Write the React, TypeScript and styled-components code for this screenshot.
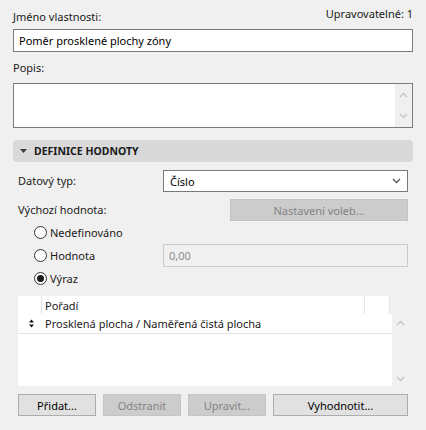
import styled, { createGlobalStyle } from 'styled-components';

const Global = createGlobalStyle`
  html, body {
    margin: 0;
    padding: 0;
    background: #f0f0f0;
  }
  body {
    font-family: "Noto Sans", "Open Sans", sans-serif;
    font-size: 11px;
    color: #1a1a1a;
  }
`

const Panel = styled.div`
  width: 426px;
  height: 430px;
  box-sizing: border-box;
  padding: 0 13px;
  display: flex;
  flex-direction: column;
`

const TopRow = styled.div`
  height: 29px;
  display: flex;
  justify-content: space-between;
`

const Label = styled.div<{ $top?: number }>`
  line-height: 16px;
  white-space: nowrap;
  padding-top: ${p => p.$top ?? 0}px;
`

const TextField = styled.div<{ $disabled?: boolean; $width?: string }>`
  box-sizing: border-box;
  height: 23px;
  width: ${p => p.$width ?? '100%'};
  background: ${p => (p.$disabled ? '#f0f0f0' : '#fff')};
  border: 1px solid ${p => (p.$disabled ? '#cccccc' : '#7a7a7a')};
  color: ${p => (p.$disabled ? '#8c8c8c' : '#000')};
  display: flex;
  align-items: center;
  padding: 0 5px;
  line-height: 16px;
`

const TextArea = styled.div`
  box-sizing: border-box;
  height: 45px;
  background: #fff;
  border: 1px solid #7a7a7a;
  display: flex;
  justify-content: flex-end;
  margin-top: 7px;
`

const ScrollBar = styled.div<{ $pad?: number }>`
  width: 17px;
  background: #f0f0f0;
  display: flex;
  flex-direction: column;
  justify-content: space-between;
  align-items: center;
  padding: ${p => p.$pad ?? 5}px 0;
`

const SectionHeader = styled.div`
  margin-top: 12px;
  height: 22px;
  background: #d9d9d9;
  border-radius: 4px;
  display: flex;
  align-items: center;
  padding-left: 7px;
  gap: 7px;
  font-size: 10.5px;
  font-weight: 700;
  color: #1a1a1a;
`

const SectionBody = styled.div`
  padding: 0 5px;
  display: flex;
  flex-direction: column;
`

const FieldRow = styled.div<{ $mt: number }>`
  margin-top: ${p => p.$mt}px;
  display: flex;
  align-items: center;
  height: 22px;
`

const RowLabel = styled.div`
  width: 145px;
  line-height: 16px;
`

const Select = styled.div`
  box-sizing: border-box;
  flex: 1;
  height: 22px;
  background: #fff;
  border: 1px solid #7a7a7a;
  display: flex;
  align-items: center;
  justify-content: space-between;
  padding: 0 6px;
  color: #000;
`

const Button = styled.div<{ $disabled?: boolean; $width?: string }>`
  box-sizing: border-box;
  height: 22px;
  width: ${p => p.$width ?? 'auto'};
  flex: ${p => (p.$width ? 'none' : '1')};
  background: ${p => (p.$disabled ? '#cccccc' : '#e1e1e1')};
  border: 1px solid ${p => (p.$disabled ? '#c4c4c4' : '#adadad')};
  color: ${p => (p.$disabled ? '#838383' : '#000')};
  display: flex;
  align-items: center;
  justify-content: center;
  white-space: nowrap;
`

const Spacer = styled.div`
  flex: 1;
`

const RadioRow = styled.div`
  height: 23px;
  display: flex;
  align-items: center;
  padding-left: 16px;
`

const RadioLabel = styled.div`
  width: 129px;
  display: flex;
  align-items: center;
  gap: 3px;
`

const Radio = styled.span<{ $checked?: boolean }>`
  box-sizing: border-box;
  width: 13px;
  height: 13px;
  border-radius: 50%;
  border: 1px solid #333;
  background: #fff;
  display: flex;
  align-items: center;
  justify-content: center;
  &::after {
    content: '';
    width: 7px;
    height: 7px;
    border-radius: 50%;
    background: ${p => (p.$checked ? '#1a1a1a' : 'transparent')};
  }
`

const List = styled.div`
  margin-top: 6px;
  height: 90px;
  display: grid;
  grid-template-columns: 1fr 16px;
  grid-template-rows: 18px 1fr;
`

const ListHead = styled.div`
  background: #fff;
  display: grid;
  grid-template-columns: 24px 1fr 25px;
  margin-right: 2px;
`

const HeadCell = styled.div`
  border-right: 1px solid #e5e5e5;
  padding-left: 3px;
  display: flex;
  align-items: center;
`

const ListBody = styled.div`
  background: #fff;
  display: flex;
  flex-direction: column;
`

const ListRow = styled.div`
  height: 19px;
  border-bottom: 1px solid #e5e5e5;
  display: flex;
  align-items: center;
`

const SortCell = styled.div`
  width: 27px;
  display: flex;
  justify-content: center;
`

const ListScroll = styled.div`
  display: flex;
  flex-direction: column;
  justify-content: space-between;
  align-items: center;
  padding: 6px 0 4px;
`

const ButtonBar = styled.div`
  margin-top: 8px;
  display: flex;
  gap: 7px;
`

const Chevron = ({ up, color = '#c2c2c2' }: { up?: boolean; color?: string }) => (
  <svg width="9" height="6" viewBox="0 0 9 6">
    <path
      d={up ? 'M1 5 L4.5 1.5 L8 5' : 'M1 1 L4.5 4.5 L8 1'}
      fill="none"
      stroke={color}
      strokeWidth="1.3"
    />
  </svg>
)

const Caret = () => (
  <svg width="7" height="4" viewBox="0 0 7 4">
    <path d="M0 0 H7 L3.5 4 Z" fill="#3c3c3c" />
  </svg>
)

const SortIcon = () => (
  <svg width="5" height="9" viewBox="0 0 5 9">
    <path d="M0 3.5 L2.5 0.5 L5 3.5 Z M0 5.5 L2.5 8.5 L5 5.5 Z" fill="#111" />
  </svg>
)

export default function App() {
  return (
    <>
      <Global />
      <Panel>
        <TopRow>
          <Label $top={9}>Jméno vlastnosti:</Label>
          <Label $top={6}>Upravovatelné: 1</Label>
        </TopRow>
        <TextField>Poměr prosklené plochy zóny</TextField>
        <Label $top={8}>Popis:</Label>
        <TextArea>
          <ScrollBar $pad={8}>
            <Chevron up />
            <Chevron />
          </ScrollBar>
        </TextArea>

        <SectionHeader>
          <Caret />
          DEFINICE HODNOTY
        </SectionHeader>

        <SectionBody>
          <FieldRow $mt={8}>
            <RowLabel>Datový typ:</RowLabel>
            <Select>
              Číslo
              <Chevron color="#555" />
            </Select>
          </FieldRow>
          <FieldRow $mt={7}>
            <RowLabel>Výchozí hodnota:</RowLabel>
            <Spacer />
            <Button $disabled $width="178px">Nastavení voleb...</Button>
          </FieldRow>

          <RadioRow>
            <RadioLabel>
              <Radio />
              Nedefinováno
            </RadioLabel>
          </RadioRow>
          <RadioRow>
            <RadioLabel>
              <Radio />
              Hodnota
            </RadioLabel>
            <TextField $disabled $width="245px">0,00</TextField>
          </RadioRow>
          <RadioRow>
            <RadioLabel>
              <Radio $checked />
              Výraz
            </RadioLabel>
          </RadioRow>

          <List>
            <ListHead>
              <HeadCell />
              <HeadCell>Pořadí</HeadCell>
              <HeadCell />
            </ListHead>
            <div />
            <ListBody>
              <ListRow>
                <SortCell>
                  <SortIcon />
                </SortCell>
                Prosklená plocha / Naměřená čistá plocha
              </ListRow>
            </ListBody>
            <ListScroll>
              <Chevron up />
              <Chevron />
            </ListScroll>
          </List>

          <ButtonBar>
            <Button $width="78px">Přidat...</Button>
            <Button $disabled $width="78px">Odstranit</Button>
            <Button $disabled $width="78px">Upravit...</Button>
            <Button>Vyhodnotit...</Button>
          </ButtonBar>
        </SectionBody>
      </Panel>
    </>
  );
}
